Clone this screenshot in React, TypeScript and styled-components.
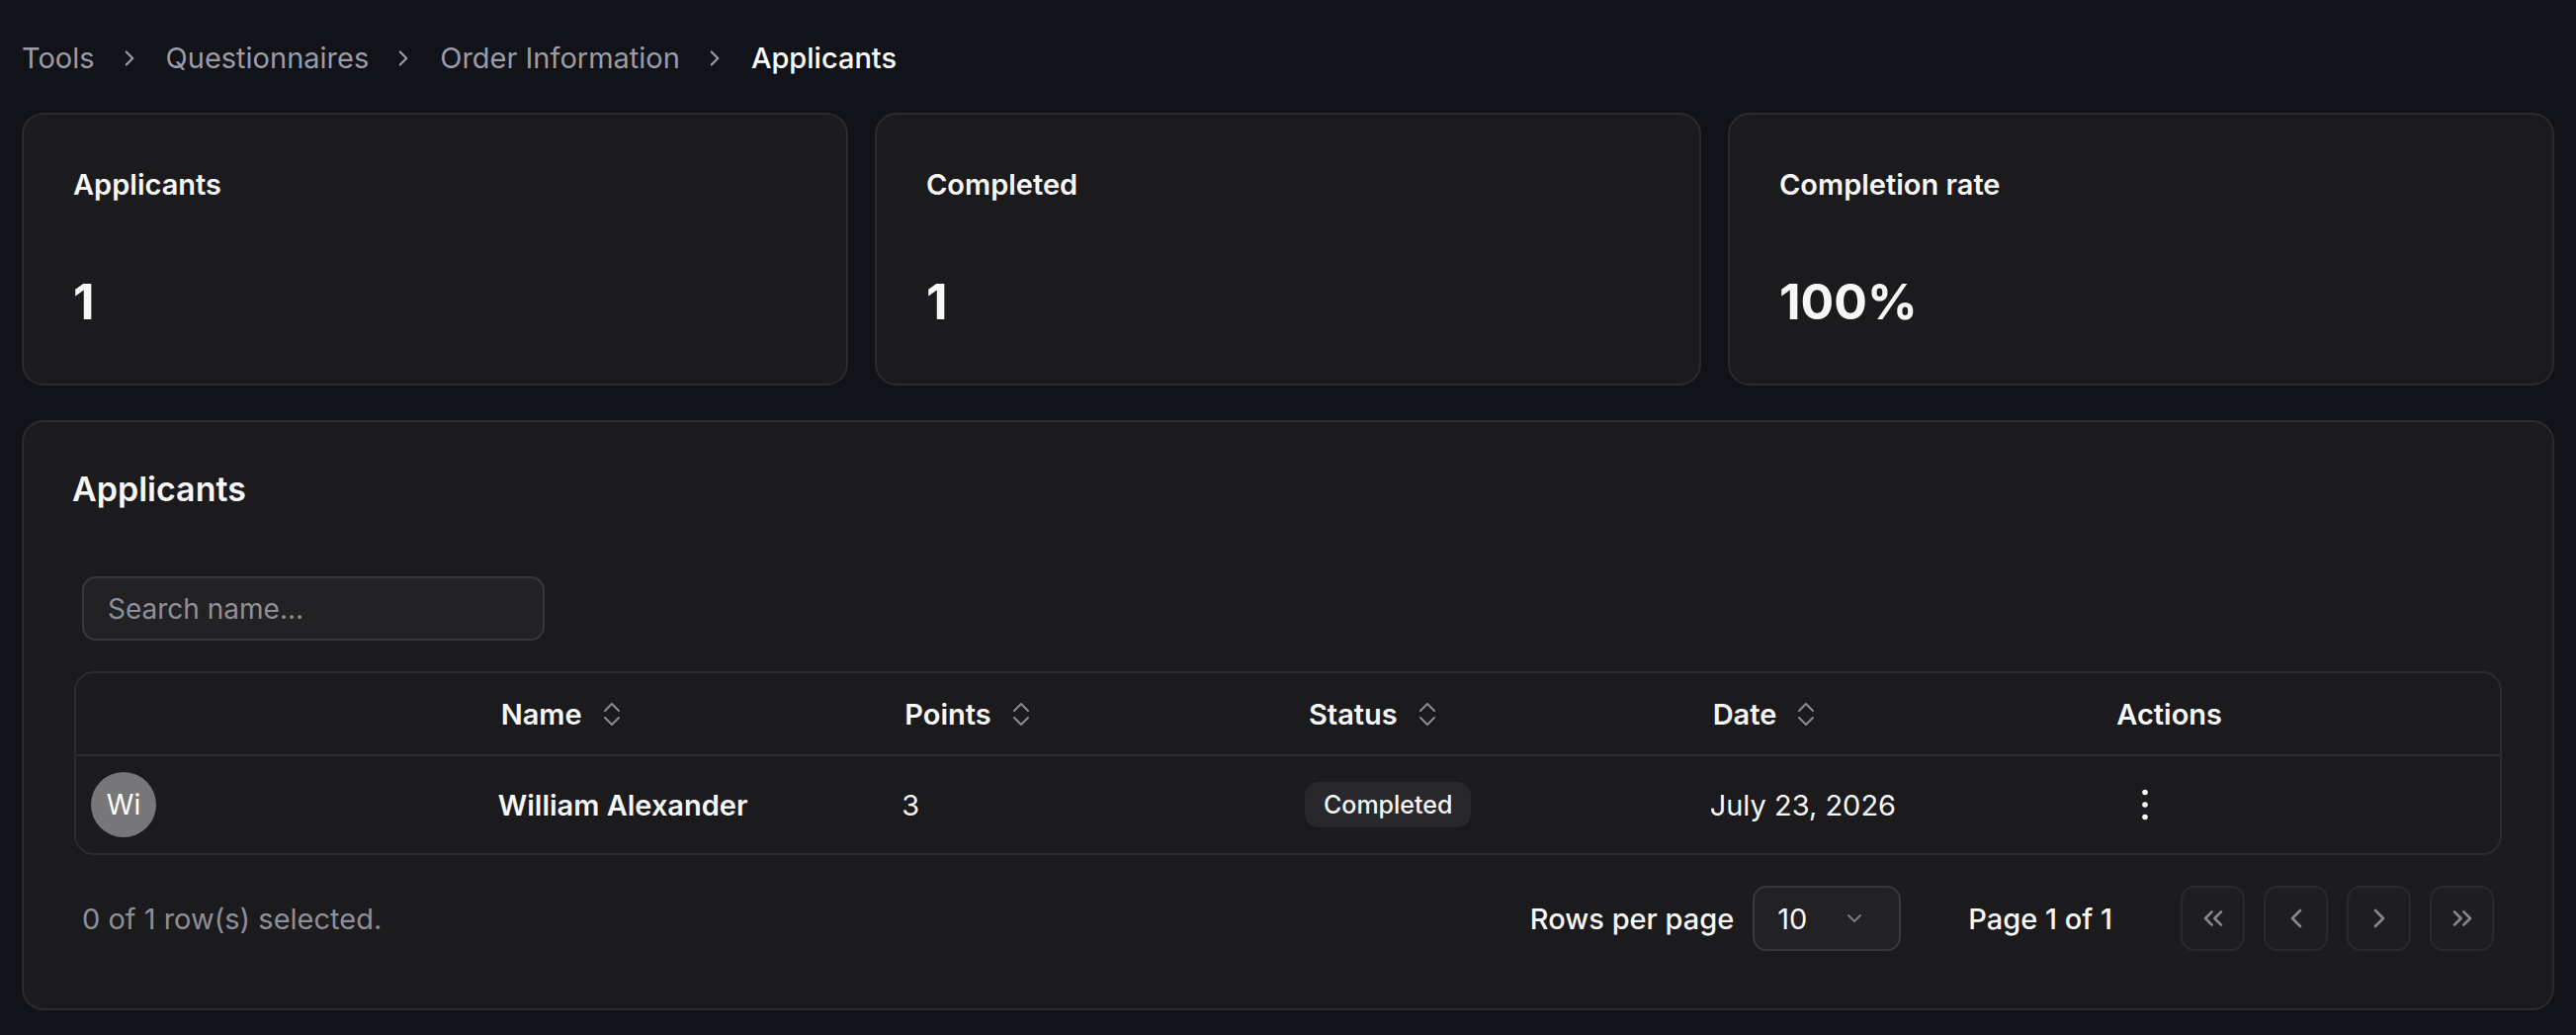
import React from "react"
import styled, { createGlobalStyle } from "styled-components"
import { ChevronRight, ChevronDown, ChevronsLeft, ChevronLeft, ChevronsRight } from "lucide-react"

const GlobalStyle = createGlobalStyle`
	html, body {
		margin: 0;
		padding: 0;
		background: #121318;
	}
	body {
		font-family: Inter, "Noto Sans", "Liberation Sans", sans-serif;
		color: #f7f7f8;
	}
	* {
		box-sizing: border-box;
	}
`

const Page = styled.div`
	padding: 37px 22px 23px;
`

const Crumbs = styled.nav`
	display: flex;
	align-items: center;
	height: 44px;
	font-size: 29px;
	line-height: 44px;
`

const Crumb = styled.span<{ $active?: boolean }>`
	color: ${(p) => (p.$active ? "#ffffff" : "#9b9ca8")};
	font-weight: ${(p) => (p.$active ? 500 : 400)};
`

const CrumbSep = styled.span`
	display: flex;
	margin: 0 24px 0 22px;
	color: #9b9ca8;
`

const StatGrid = styled.div`
	display: grid;
	grid-template-columns: repeat(3, 1fr);
	gap: 27px;
	margin-top: 33px;
`

const StatCard = styled.div`
	background: #1b1b1e;
	border: 2px solid #2b2b2f;
	border-radius: 22px;
	padding: 49px 50px 53px;
`

const StatTitle = styled.div`
	font-size: 29px;
	line-height: 44px;
	font-weight: 600;
	color: #f7f7f8;
`

const StatValue = styled.div`
	margin-top: 66px;
	font-size: 50px;
	line-height: 60px;
	font-weight: 650;
	color: #f7f7f8;
`

const Panel = styled.section`
	margin-top: 35px;
	background: #1b1b1e;
	border: 2px solid #2b2b2f;
	border-radius: 22px;
	padding: 42px 49px 58px;
`

const PanelTitle = styled.h2`
	margin: 0;
	font-size: 34px;
	line-height: 51px;
	font-weight: 600;
`

const SearchRow = styled.div`
	margin-top: 63px;
	padding-left: 10px;
`

const SearchInput = styled.input`
	width: 468px;
	height: 65px;
	border: 2px solid #38383c;
	border-radius: 14px;
	background: #222225;
	padding: 0 24px;
	font-family: inherit;
	font-size: 28px;
	color: #f7f7f8;
	outline: none;
	&::placeholder {
		color: #8e8f99;
	}
`

const TableFrame = styled.div`
	margin: 31px 2px 0;
	border: 2px solid #2c2c30;
	border-radius: 20px;
	overflow: hidden;
`

const Table = styled.table`
	width: 100%;
	border-collapse: collapse;
	table-layout: fixed;
`

const Th = styled.th`
	height: 83px;
	padding: 0 21px;
	text-align: left;
	font-size: 29px;
	font-weight: 600;
	color: #f7f7f8;
	border-bottom: 2px solid #2c2c30;
`

const ThInner = styled.span`
	display: inline-flex;
	align-items: center;
	gap: 21px;
`

const Td = styled.td<{ $pad?: number }>`
	height: 99px;
	padding: 0 ${(p) => p.$pad ?? 18}px;
	font-size: 29px;
	color: #f7f7f8;
`

const Strong = styled.span`
	font-weight: 600;
`

const Avatar = styled.div`
	width: 66px;
	height: 66px;
	border-radius: 50%;
	background: #777779;
	display: flex;
	align-items: center;
	justify-content: center;
	font-size: 28px;
	color: #ffffff;
`

const Badge = styled.span`
	display: inline-flex;
	align-items: center;
	height: 46px;
	padding: 0 19px;
	border-radius: 14px;
	background: #28282b;
	font-size: 25px;
	font-weight: 500;
	color: #f7f7f8;
`

const IconButton = styled.button`
	width: 65px;
	height: 65px;
	display: flex;
	align-items: center;
	justify-content: center;
	background: transparent;
	border: none;
	color: #f7f7f8;
	padding: 0;
`

const Footer = styled.div`
	margin-top: 31px;
	height: 66px;
	padding: 0 10px;
	display: flex;
	align-items: center;
	justify-content: space-between;
`

const Muted = styled.span`
	font-size: 29px;
	color: #8e8f99;
`

const Pager = styled.div`
	display: flex;
	align-items: center;
`

const PagerLabel = styled.span`
	font-size: 29px;
	font-weight: 500;
	color: #f7f7f8;
`

const PageInfo = styled(PagerLabel)`
	margin: 0 69px 0 68px;
`

const Select = styled.div`
	margin-left: 19px;
	width: 150px;
	height: 66px;
	border: 2px solid #38383c;
	border-radius: 14px;
	background: #222225;
	display: flex;
	align-items: center;
	justify-content: space-between;
	padding: 0 33px 0 23px;
	font-size: 29px;
	color: #f7f7f8;
`

const PageButtons = styled.div`
	display: flex;
	gap: 19px;
`

const PageButton = styled.button`
	width: 65px;
	height: 66px;
	border: 2px solid #2a2a2e;
	border-radius: 14px;
	background: #1e1e21;
	color: #86868c;
	display: flex;
	align-items: center;
	justify-content: center;
	padding: 0;
`

const SortIcon = () => (
	<svg width="18" height="25" viewBox="0 0 18 25" fill="none" stroke="#8a8b94" strokeWidth="2" strokeLinecap="round" strokeLinejoin="round">
		<path d="M2 9 9 2l7 7" />
		<path d="M2 16l7 7 7-7" />
	</svg>
)

const Kebab = () => (
	<svg width="10" height="36" viewBox="0 0 10 36" fill="#f7f7f8">
		<circle cx="5" cy="5.5" r="2.8" />
		<circle cx="5" cy="18" r="2.8" />
		<circle cx="5" cy="30.5" r="2.8" />
	</svg>
)

const stats = [
	{ title: "Applicants", value: "1" },
	{ title: "Completed", value: "1" },
	{ title: "Completion rate", value: "100%" },
]

const crumbs = ["Tools", "Questionnaires", "Order Information"]

const App: React.FunctionComponent = () => (
	<Page>
		<GlobalStyle />
		<Crumbs>
			{crumbs.map((c) => (
				<React.Fragment key={c}>
					<Crumb>{c}</Crumb>
					<CrumbSep>
						<ChevronRight size={26} strokeWidth={2} />
					</CrumbSep>
				</React.Fragment>
			))}
			<Crumb $active>Applicants</Crumb>
		</Crumbs>

		<StatGrid>
			{stats.map((s) => (
				<StatCard key={s.title}>
					<StatTitle>{s.title}</StatTitle>
					<StatValue>{s.value}</StatValue>
				</StatCard>
			))}
		</StatGrid>

		<Panel>
			<PanelTitle>Applicants</PanelTitle>
			<SearchRow>
				<SearchInput placeholder="Search name..." />
			</SearchRow>
			<TableFrame>
				<Table>
					<thead>
						<tr>
							<Th></Th>
							{["Name", "Points", "Status", "Date"].map((h) => (
								<Th key={h}>
									<ThInner>
										{h}
										<SortIcon />
									</ThInner>
								</Th>
							))}
							<Th>Actions</Th>
						</tr>
					</thead>
					<tbody>
						<tr>
							<Td $pad={15}>
								<Avatar>Wi</Avatar>
							</Td>
							<Td>
								<Strong>William Alexander</Strong>
							</Td>
							<Td>3</Td>
							<Td $pad={17}>
								<Badge>Completed</Badge>
							</Td>
							<Td>July 23, 2026</Td>
							<Td $pad={17}>
								<IconButton>
									<Kebab />
								</IconButton>
							</Td>
						</tr>
					</tbody>
				</Table>
			</TableFrame>
			<Footer>
				<Muted>0 of 1 row(s) selected.</Muted>
				<Pager>
					<PagerLabel>Rows per page</PagerLabel>
					<Select>
						<span>10</span>
						<ChevronDown size={24} color="#7c7c82" strokeWidth={2} />
					</Select>
					<PageInfo>Page 1 of 1</PageInfo>
					<PageButtons>
						<PageButton>
							<ChevronsLeft size={32} strokeWidth={2} />
						</PageButton>
						<PageButton>
							<ChevronLeft size={32} strokeWidth={2} />
						</PageButton>
						<PageButton>
							<ChevronRight size={32} strokeWidth={2} />
						</PageButton>
						<PageButton>
							<ChevronsRight size={32} strokeWidth={2} />
						</PageButton>
					</PageButtons>
				</Pager>
			</Footer>
		</Panel>
	</Page>
)

export default App
